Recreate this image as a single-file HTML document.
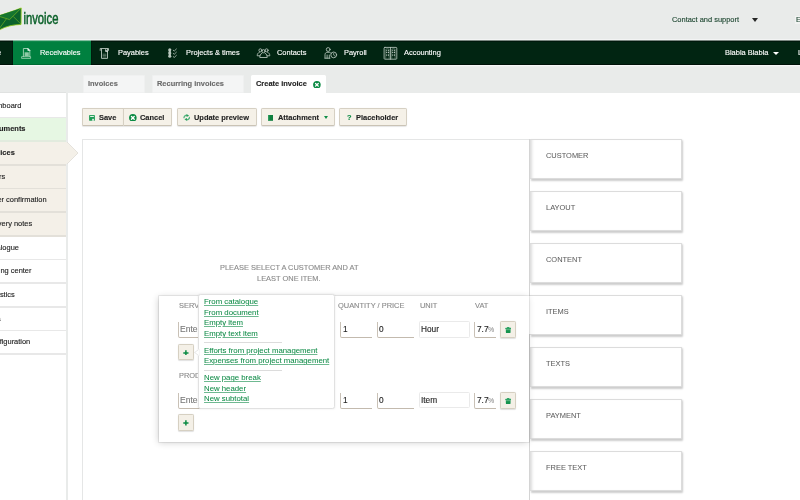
<!DOCTYPE html>
<html><head><meta charset="utf-8"><title>Create invoice</title>
<style>
*{box-sizing:border-box;margin:0;padding:0}
html,body{width:800px;height:500px;overflow:hidden}
body{background:#e9ebea;font-family:"Liberation Sans",Arial,sans-serif;color:#222;position:relative;font-size:7.45px}
.abs{position:absolute}
.t,svg text{will-change:transform}
.t{-webkit-text-stroke:0.12px}
.t{position:absolute;white-space:nowrap;line-height:10px;font-size:7.45px;color:#222}
.t.w{color:#fff}
.t.b{font-weight:bold}
.t.g{color:#8a8a8a}
#nav{position:absolute;left:0;top:40px;width:800px;height:25px;background:#012512;box-shadow:inset 0 -1px 0 rgba(0,0,0,.5), inset 0 2px 0 rgba(0,0,0,.3)}
#navline{position:absolute;left:0;top:65px;width:800px;height:2px;background:linear-gradient(#f6f7f7 0,#f6f7f7 50%,rgba(246,247,247,.3) 50%,rgba(246,247,247,.3) 100%)}
#navline2{position:absolute;left:0;top:39px;width:800px;height:2px;background:linear-gradient(rgba(246,247,247,.75) 0,rgba(246,247,247,.75) 50%,rgba(246,247,247,.5) 50%,rgba(246,247,247,.5) 100%)}
#nav .act{position:absolute;left:12.8px;top:0;width:78.2px;height:25px;background:#00803f;box-shadow:inset 0 -1px 0 rgba(0,0,0,.16), inset 0 2px 0 rgba(255,255,255,.06), -0.6px 0 0 rgba(0,0,0,.5), 0.6px 0 0 rgba(0,0,0,.4)}
#side{position:absolute;left:0;top:93.4px;width:66.2px;height:407px;background:#fff;box-shadow:0 -0.7px 0 #dcdedd}
#sideb{display:none}
.si{position:absolute;left:0;width:66.5px;height:23.67px;border-bottom:1px solid #e3e3e3}
#main{position:absolute;left:67.9px;top:92.6px;width:733px;height:408px;background:#fff}
.tab{position:absolute;top:74.5px;height:18.3px;background:#f4f5f5;border-radius:1.5px 1.5px 0 0;box-shadow:inset 0 0 0 0.8px #eeefef}
.tab.on{background:#fff;box-shadow:none}
.btn{position:absolute;top:108.3px;height:17.7px;background:#f5f1e8;border:1px solid #d6d0c3;border-bottom-color:#cac3b5;border-radius:1.8px;box-shadow:0 0.5px 1px rgba(0,0,0,.1)}
.card{position:absolute;left:530.2px;width:152px;height:39.6px;background:#fff;border:1px solid #dcdcdc;border-left:none;border-radius:0 1.2px 1.2px 0;box-shadow:1px 1.2px 2px rgba(0,0,0,.2), inset 4px 0 3px -2px rgba(0,0,0,.14)}
#prev{position:absolute;left:82.1px;top:139px;width:448.300px;height:380px;background:#fff;border:1.7px solid #e5e6e6}
#prevr{position:absolute;left:528.9px;top:139px;width:1.4px;height:380px;background:#d4d4d4}
#pop{position:absolute;left:158.8px;top:295.7px;width:370.4px;height:146.8px;background:#fff;box-shadow:0 0 0 0.8px rgba(0,0,0,.09), -1.5px 0.5px 7px rgba(0,0,0,.2)}
.inp{position:absolute;height:15.9px;border-left:1.6px solid #c9c1b6;border-bottom:1.7px solid #c3baae;border-radius:0 0 0 2px;background:#fff}
.sel{position:absolute;height:16.5px;border:1px solid #eaeaea;border-radius:1.5px;background:#fff}
.sq{position:absolute;width:16.3px;height:15.8px;background:#f4f0e7;border:0.8px solid #d6d0c2;border-radius:1.5px;box-shadow:0 0.5px 1px rgba(0,0,0,.12)}
#menu{position:absolute;left:198.1px;top:294.3px;width:137.2px;height:114.8px;background:#fff;border:1px solid #e1e1e1;border-radius:2.6px;box-shadow:0 0 2px rgba(0,0,0,.1)}
.t.a{color:#0f8b47;text-decoration:underline;text-decoration-thickness:0.7px;text-underline-offset:0.6px;text-decoration-color:rgba(15,139,71,.6);-webkit-text-stroke:0.05px}
.hr{position:absolute;left:204.3px;width:78px;height:0.8px;background:#dcdcdc}
</style></head><body>
<svg class="abs" style="left:0;top:0" width="70" height="40" viewBox="0 0 70 40">
<path d="M-2 16 C6 13.500 14 10.800 21.200 8 L21 24.400 C13 24.600 6 26.200 -1 30 L-2 30 Z" fill="#0d6a2f" stroke="#e4efcf" stroke-width="1.800" stroke-linejoin="round"/>
<path d="M-2 16 C6 13.500 14 10.800 21.200 8 L21 24.400 C13 24.600 6 26.200 -1 30 L-2 30 Z" fill="#0c632c" stroke="#8cc321" stroke-width="0.800" stroke-linejoin="round"/>
<path d="M-2 16 L9.600 19.600 L21 8.300" fill="#15752f" stroke="#8cc321" stroke-width="0.600" stroke-linejoin="round"/>
<path d="M-1 29 L6.500 18.700 M13.300 16.500 L20.800 24" fill="none" stroke="#8cc321" stroke-width="0.550"/>
<text x="0" y="0" transform="translate(23.5 24.35) scale(0.662 1.01)" font-family="Liberation Sans, sans-serif" font-size="17" fill="#0b612a" stroke="#0b612a" stroke-width="0.55">invoice</text>
</svg>
<div class="t " style="left:672.20px;top:14.75px;color:#1d4630">Contact and support</div>
<div class="abs" style="left:751.8px;top:17.7px;width:0;height:0;border-left:3.6px solid transparent;border-right:3.6px solid transparent;border-top:4px solid #262626"></div>
<div class="abs" style="left:795.300px;top:15.600px;width:5px;height:8.200px;background:#f2f3f2"></div>
<div class="t " style="left:796.20px;top:14.75px;color:#1d4630">E</div>
<div id="nav"><div class="act"></div></div><div id="navline"></div><div id="navline2"></div>
<svg class="abs" style="left:0;top:40px" width="800" height="26" viewBox="0 40 800 26" fill="none" stroke-linecap="round" stroke-linejoin="round">
<!-- receivables -->
<g stroke="#a6d6b8" stroke-width="0.9">
<path d="M23.4 56.6V48.500h4.400l2 2V56.600"/>
<path d="M22 56.700h8.600v1.700h-8.600z" stroke-width="0.800"/>
<rect x="24.600" y="52.300" width="4.200" height="4" fill="#8fcaa6" stroke="none"/>
<path d="M27.800 48.500v2h2z" fill="#fff" stroke="#fff" stroke-width="0.500"/>
</g>
<!-- payables -->
<g stroke="#b9c7be" stroke-width="0.9">
<path d="M100.200 50.400V48.500h8.300v1.900"/>
<path d="M101.500 49V58.400h6V49" />
<path d="M103 54.200h3M103 55.600h3M103 57h3" stroke-width="0.600" stroke="#8da595"/>
<path d="M105.600 49.700v1.900h1.700z" fill="#fff" stroke="#fff" stroke-width="0.500"/>
</g>
<!-- projects -->
<g fill="#b9c7be" stroke="none">
<circle cx="169.800" cy="49.800" r="1.550"/><circle cx="169.800" cy="53" r="1.550"/><circle cx="169.800" cy="56.200" r="1.550"/><rect x="168.700" y="49.800" width="2.200" height="6.400"/>
</g>
<g stroke="#b9c7be" stroke-width="0.800">
<path d="M173.300 50.300l1 .7 2.100-2"/><path d="M173.300 53.500l1 .7 2.100-2"/><path d="M173.300 56.700l1 .7 2.100-2"/>
</g>
<!-- contacts -->
<g stroke="#b9c7be" stroke-width="0.850">
<circle cx="260.400" cy="50.300" r="1.500"/><circle cx="266.600" cy="50.300" r="1.500"/><circle cx="263.500" cy="51.200" r="1.600"/>
<path d="M259.400 52.300c-1.600.600-2.200 1.800-2.200 3.500h2.600"/>
<path d="M267.600 52.300c1.600.600 2.200 1.800 2.200 3.500h-2.600"/>
<path d="M262 53.200c-1.800.800-2.200 2.400-2.200 4.300h7.400c0-1.900-.4-3.500-2.200-4.300"/>
</g>
<!-- payroll -->
<g stroke="#b9c7be" stroke-width="0.850">
<circle cx="328.200" cy="49.500" r="1.900"/>
<path d="M325 58.200v-3.500c0-1.500 1-2.400 2-2.400h2.300c.8 0 1.400.4 1.700 1"/>
<path d="M327.100 55v3.200M329.300 55v3.200M325 58.200h5"/>
<circle cx="333.700" cy="54.900" r="2.900"/>
<path d="M333.700 53.200v1.900l1.300 1" stroke-width="0.700"/>
</g>
<!-- accounting -->
<g stroke="#b9c7be" stroke-width="0.850">
<rect x="384.100" y="47.400" width="12.700" height="11.800" rx="0.800"/>
<path d="M390.450 47.400v11.800"/>
<path d="M385.800 58.800v-9.200c0-.5.300-.8.800-.8h1.700c.5 0 .8.300.8.800v9.200" stroke-width="0.600" stroke="#7f9988"/>
<path d="M391.800 58.800v-9.200c0-.5.300-.8.800-.8h1.700c.5 0 .8.300.8.800v9.200" stroke-width="0.600" stroke="#7f9988"/>
</g>
<g fill="#a9b9af" stroke="none">
<rect x="386.300" y="49.800" width="0.900" height="1.500"/><rect x="388" y="49.800" width="0.900" height="1.500"/>
<rect x="392.300" y="49.800" width="0.900" height="1.500"/><rect x="394" y="49.800" width="0.900" height="1.500"/>
<rect x="386.300" y="54.300" width="0.900" height="1.600"/><rect x="388" y="54.300" width="0.900" height="1.600"/>
<rect x="392.300" y="54.300" width="0.900" height="1.600"/><rect x="394" y="54.300" width="0.900" height="1.600"/>
</g>
<g fill="#fff" stroke="none">
<rect x="386.100" y="52.200" width="1.200" height="0.900" rx=".4"/><rect x="387.900" y="52.200" width="1.200" height="0.900" rx=".4"/>
<rect x="392.100" y="52.200" width="1.200" height="0.900" rx=".4"/><rect x="393.900" y="52.200" width="1.200" height="0.900" rx=".4"/>
</g>
</svg>
<div class="t w" style="left:-3.40px;top:47.75px;"><b>e</b></div>
<div class="t w" style="left:39.60px;top:47.75px;">Receivables</div>
<div class="t w" style="left:117.80px;top:47.75px;">Payables</div>
<div class="t w" style="left:185.80px;top:47.75px;">Projects &amp; times</div>
<div class="t w" style="left:276.80px;top:47.75px;">Contacts</div>
<div class="t w" style="left:343.90px;top:47.75px;">Payroll</div>
<div class="t w" style="left:404.30px;top:47.75px;">Accounting</div>
<div class="t w" style="left:725.10px;top:47.75px;">Blabla Blabla</div>
<div class="t w" style="left:798.20px;top:47.75px;">L</div>
<div class="abs" style="left:773.3px;top:52px;width:0;height:0;border-left:3.4px solid transparent;border-right:3.4px solid transparent;border-top:3.8px solid #fff"></div>
<div class="tab" style="left:82.800px;width:62.600px"></div><div class="tab" style="left:152.200px;width:91.500px"></div><div class="tab on" style="left:250.600px;width:75.700px"></div>
<div class="t b" style="left:88.10px;top:78.75px;color:#6a6a6a">Invoices</div>
<div class="t b" style="left:157.40px;top:78.75px;color:#6a6a6a">Recurring invoices</div>
<div class="t b" style="left:255.70px;top:78.75px;">Create invoice</div>
<svg class="abs" style="left:313.100px;top:80.500px" width="7.800" height="7.600" viewBox="0 0 10 10"><circle cx="5" cy="5" r="5" fill="#0a8a43"/><path d="M3.2 3.2L6.8 6.8M6.8 3.2L3.2 6.8" stroke="#fff" stroke-width="1.7" stroke-linecap="round"/></svg>
<div id="side"></div><div id="sideb"></div><div id="main"></div>
<div class="abs" style="left:0;width:66.2px;top:116.75px;height:1.7px;background:#e8e8e8"></div>
<div class="t " style="right:778.50px;top:100.75px;">Dashboard</div>
<div class="abs" style="left:0;width:66.2px;top:118.45px;height:21.94px;background:#e6f7e3;"></div>
<div class="abs" style="left:0;width:66.2px;top:140.39px;height:1.7px;background:#e2ebde"></div>
<div class="t b" style="right:774.20px;top:123.75px;">Documents</div>
<div class="abs" style="left:0;width:66.2px;top:142.09px;height:21.94px;background:#f4f0e8;"></div>
<div class="abs" style="left:0;width:66.2px;top:164.03px;height:1.7px;background:#e3e0d9"></div>
<div class="t b" style="right:785.00px;top:147.75px;">Invoices</div>
<div class="abs" style="left:0;width:66.2px;top:165.73px;height:21.94px;background:#f4f0e8;"></div>
<div class="abs" style="left:0;width:66.2px;top:187.67px;height:1.7px;background:#e3e0d9"></div>
<div class="t " style="right:795.00px;top:171.75px;">Offers</div>
<div class="abs" style="left:0;width:66.2px;top:189.37px;height:21.94px;background:#f4f0e8;"></div>
<div class="abs" style="left:0;width:66.2px;top:211.31px;height:1.7px;background:#e3e0d9"></div>
<div class="t " style="right:753.00px;top:194.75px;">Order confirmation</div>
<div class="abs" style="left:0;width:66.2px;top:213.01px;height:21.94px;background:#f4f0e8;"></div>
<div class="abs" style="left:0;width:66.2px;top:234.95px;height:1.7px;background:#e3e0d9"></div>
<div class="t " style="right:767.50px;top:218.75px;">Delivery notes</div>
<div class="abs" style="left:0;width:66.2px;top:258.59px;height:1.7px;background:#e8e8e8"></div>
<div class="t " style="right:781.00px;top:242.75px;">Catalogue</div>
<div class="abs" style="left:0;width:66.2px;top:282.23px;height:1.7px;background:#e8e8e8"></div>
<div class="t " style="right:768.50px;top:265.75px;">Dunning center</div>
<div class="abs" style="left:0;width:66.2px;top:305.87px;height:1.7px;background:#e8e8e8"></div>
<div class="t " style="right:784.80px;top:289.75px;">Statistics</div>
<div class="abs" style="left:0;width:66.2px;top:329.51px;height:1.7px;background:#e8e8e8"></div>
<div class="t " style="right:799.00px;top:313.75px;">Data</div>
<div class="abs" style="left:0;width:66.2px;top:353.15px;height:1.7px;background:#e8e8e8"></div>
<div class="t " style="right:770.20px;top:336.75px;">Configuration</div>
<svg class="abs" style="left:66px;top:142.09px" width="13" height="22" viewBox="0 0 13 22"><path d="M0 0 L0.500 0 L12 11 L0.500 22 L0 22 Z" fill="#f4f0e8"/><path d="M0.500 -0.500 L12 11 L0.500 22.500" fill="none" stroke="#e2dfd8" stroke-width="0.900"/></svg>
<div class="btn" style="left:82px;width:41.4px;border-radius:1.5px 0 0 1.5px;border-right:none"></div>
<div class="btn" style="left:123px;width:49.3px;border-radius:0 1.5px 1.5px 0"></div>
<div class="btn" style="left:177px;width:79.8px;"></div>
<div class="btn" style="left:261px;width:74.0px;"></div>
<div class="btn" style="left:339px;width:67.8px;"></div>
<div class="t b" style="left:98.70px;top:112.75px;">Save</div>
<div class="t b" style="left:139.80px;top:112.75px;">Cancel</div>
<div class="t b" style="left:193.70px;top:112.75px;">Update preview</div>
<div class="t b" style="left:277.80px;top:112.75px;">Attachment</div>
<div class="t b" style="left:356.00px;top:112.75px;">Placeholder</div>
<div class="t b" style="left:347.20px;top:112.75px;color:#0a8a43">?</div>
<svg class="abs" style="left:88.7px;top:115px" width="6" height="5.800" viewBox="0 0 10 10"><rect x="0" y="0" width="10" height="10" rx="0.800" fill="#1f9c55"/><rect x="1.800" y="1.600" width="6.400" height="1.800" fill="#e8f4ec"/><rect x="5.200" y="6.600" width="3.200" height="3.400" fill="#d9eee0"/></svg>
<svg class="abs" style="left:128.9px;top:113.800px" width="7.700" height="7.600" viewBox="0 0 10 10"><circle cx="5" cy="5" r="5" fill="#0a8a43"/><path d="M3.2 3.2L6.800 6.800M6.800 3.200L3.200 6.800" stroke="#fff" stroke-width="1.8" stroke-linecap="round"/></svg>
<svg class="abs" style="left:182.600px;top:114.400px" width="7.600" height="7" viewBox="0 0 7.600 7"><path d="M1 3.600C1.300 1.800 3 1 4.600 1.400M6.600 3.400C6.300 5.200 4.600 6 3 5.600" fill="none" stroke="#55b680" stroke-width="1.350" stroke-linecap="round"/><path d="M3.500 0.200L6.200 1.700L3.600 3Z" fill="#2a9d5c"/><path d="M4.100 6.800L1.400 5.300L4 4Z" fill="#2a9d5c"/></svg>
<svg class="abs" style="left:268px;top:115.100px" width="5.300" height="5.800" viewBox="0 0 5.600 6.600"><rect x="0" y="0" width="5.600" height="6.600" fill="#0f7f3f"/><rect x="0" y="0" width="1.300" height="6.600" fill="#2fa060"/></svg>
<div class="abs" style="left:323.800px;top:116.100px;width:0;height:0;border-left:2.400px solid transparent;border-right:2.400px solid transparent;border-top:3px solid #0f8d47"></div>
<div id="prev"></div>
<div class="t g" style="left:219.50px;top:262.75px;">PLEASE SELECT A CUSTOMER AND AT</div>
<div class="t g" style="left:257.00px;top:273.75px;">LEAST ONE ITEM.</div>
<div class="card" style="top:139.2px"></div>
<div class="t " style="left:545.70px;top:150.75px;color:#5c5c5c;-webkit-text-stroke:0.04px">CUSTOMER</div>
<div class="card" style="top:191.2px"></div>
<div class="t " style="left:545.70px;top:202.75px;color:#5c5c5c;-webkit-text-stroke:0.04px">LAYOUT</div>
<div class="card" style="top:243.2px"></div>
<div class="t " style="left:545.70px;top:254.75px;color:#5c5c5c;-webkit-text-stroke:0.04px">CONTENT</div>
<div class="card" style="top:295.2px;box-shadow:1px 1.2px 2px rgba(0,0,0,.2)"></div>
<div class="t " style="left:545.70px;top:306.75px;color:#5c5c5c;-webkit-text-stroke:0.04px">ITEMS</div>
<div class="card" style="top:347.2px"></div>
<div class="t " style="left:545.70px;top:358.75px;color:#5c5c5c;-webkit-text-stroke:0.04px">TEXTS</div>
<div class="card" style="top:399.2px"></div>
<div class="t " style="left:545.70px;top:410.75px;color:#5c5c5c;-webkit-text-stroke:0.04px">PAYMENT</div>
<div class="card" style="top:451.2px"></div>
<div class="t " style="left:545.70px;top:462.75px;color:#5c5c5c;-webkit-text-stroke:0.04px">FREE TEXT</div>
<div class="card" style="top:503.2px"></div>
<div id="prevr"></div><div class="abs" style="left:528px;top:296.200px;width:3px;height:38px;background:#fff"></div>
<div id="pop"></div>
<div class="t g" style="left:179.30px;top:300.75px;">SERVICE</div>
<div class="t g" style="left:337.80px;top:300.75px;">QUANTITY / PRICE</div>
<div class="t g" style="left:420.00px;top:300.75px;">UNIT</div>
<div class="t g" style="left:475.00px;top:300.75px;">VAT</div>
<div class="t g" style="left:179.30px;top:370.75px;">PRODUCTS</div>
<div class="inp" style="left:177.900px;top:322.1px;width:150px"></div>
<div class="t " style="left:180.40px;top:324.25px;font-size:8.5px;color:#777">Enter</div>
<div class="inp" style="left:340.200px;top:322.1px;width:31.500px"></div>
<div class="t " style="left:342.90px;top:324.25px;font-size:8.3px;">1</div>
<div class="inp" style="left:376.500px;top:322.1px;width:37.200px"></div>
<div class="t " style="left:378.50px;top:324.25px;font-size:8.3px;">0</div>
<div class="sel" style="left:419.100px;top:321.1px;width:51px;height:16.500px"></div>
<div class="t " style="left:420.50px;top:324.25px;font-size:8.3px;">Hour</div>
<div class="inp" style="left:474.100px;top:322.1px;width:22px"></div>
<div class="t " style="left:476.50px;top:324.25px;font-size:8.3px;">7.7</div>
<div class="t " style="left:488.20px;top:324.75px;font-size:7px;color:#999">%</div>
<div class="sq" style="left:499.600px;top:321.40000000000003px;height:16.400px;width:16.700px"></div>
<svg class="abs" style="left:504.700px;top:326.8px" width="6.400" height="6.600" viewBox="0 0 10 10.400"><rect x="0.200" y="1" width="9.600" height="2.700" rx="1.300" fill="#2da364"/><rect x="3" y="0" width="4" height="2" rx="1" fill="#2da364"/><path d="M1.300 3.400h7.400v4.600a2.200 2.200 0 0 1-2.200 2.200h-3a2.200 2.200 0 0 1-2.200-2.200z" fill="#16934e"/><path d="M1.300 4.300h7.400" stroke="#7cc79c" stroke-width="0.700"/></svg>
<div class="sq" style="left:177.800px;top:343.8px;height:16.300px;width:16.200px"></div>
<svg class="abs" style="left:183px;top:349.5px" width="5.800" height="5.800" viewBox="0 0 10 10"><path d="M5 0.500V9.500M0.500 5H9.500" stroke="#0a8a43" stroke-width="2.600"/></svg>
<div class="inp" style="left:177.900px;top:392.90000000000003px;width:150px"></div>
<div class="t " style="left:180.40px;top:395.25px;font-size:8.5px;color:#777">Enter</div>
<div class="inp" style="left:340.200px;top:392.90000000000003px;width:31.500px"></div>
<div class="t " style="left:342.90px;top:395.25px;font-size:8.3px;">1</div>
<div class="inp" style="left:376.500px;top:392.90000000000003px;width:37.200px"></div>
<div class="t " style="left:378.50px;top:395.25px;font-size:8.3px;">0</div>
<div class="sel" style="left:419.100px;top:391.90000000000003px;width:51px;height:16.500px"></div>
<div class="t " style="left:420.50px;top:395.25px;font-size:8.3px;">Item</div>
<div class="inp" style="left:474.100px;top:392.90000000000003px;width:22px"></div>
<div class="t " style="left:476.50px;top:395.25px;font-size:8.3px;">7.7</div>
<div class="t " style="left:488.20px;top:395.75px;font-size:7px;color:#999">%</div>
<div class="sq" style="left:499.600px;top:392.20000000000005px;height:16.400px;width:16.700px"></div>
<svg class="abs" style="left:504.700px;top:397.6px" width="6.400" height="6.600" viewBox="0 0 10 10.400"><rect x="0.200" y="1" width="9.600" height="2.700" rx="1.300" fill="#2da364"/><rect x="3" y="0" width="4" height="2" rx="1" fill="#2da364"/><path d="M1.300 3.400h7.400v4.600a2.200 2.200 0 0 1-2.200 2.200h-3a2.200 2.200 0 0 1-2.200-2.200z" fill="#16934e"/><path d="M1.300 4.300h7.400" stroke="#7cc79c" stroke-width="0.700"/></svg>
<div class="sq" style="left:177.800px;top:414.4px;height:16.300px;width:16.200px"></div>
<svg class="abs" style="left:183px;top:420.09999999999997px" width="5.800" height="5.800" viewBox="0 0 10 10"><path d="M5 0.500V9.500M0.500 5H9.500" stroke="#0a8a43" stroke-width="2.600"/></svg>
<div id="menu"></div>
<svg class="abs" style="left:194.300px;top:349px" width="5.400" height="7" viewBox="0 0 5.400 7"><path d="M5.400 0L0.600 3.500L5.400 7Z" fill="#fff" stroke="#dcdcdc" stroke-width="0.700"/><rect x="4.600" y="0" width="1" height="7" fill="#fff"/></svg>
<div class="t a" style="left:204.40px;top:296.75px;font-size:7.8px;">From catalogue</div>
<div class="t a" style="left:204.40px;top:307.75px;font-size:7.8px;">From document</div>
<div class="t a" style="left:204.40px;top:317.75px;font-size:7.8px;">Empty item</div>
<div class="t a" style="left:204.40px;top:328.75px;font-size:7.8px;">Empty text item</div>
<div class="t a" style="left:204.40px;top:345.75px;font-size:7.8px;">Efforts from project management</div>
<div class="t a" style="left:204.40px;top:355.75px;font-size:7.8px;">Expenses from project management</div>
<div class="t a" style="left:204.40px;top:372.75px;font-size:7.8px;">New page break</div>
<div class="t a" style="left:204.40px;top:383.75px;font-size:7.8px;">New header</div>
<div class="t a" style="left:204.40px;top:393.75px;font-size:7.8px;">New subtotal</div>
<div class="hr" style="top:341.900px"></div><div class="hr" style="top:369.900px"></div>
</body></html>
